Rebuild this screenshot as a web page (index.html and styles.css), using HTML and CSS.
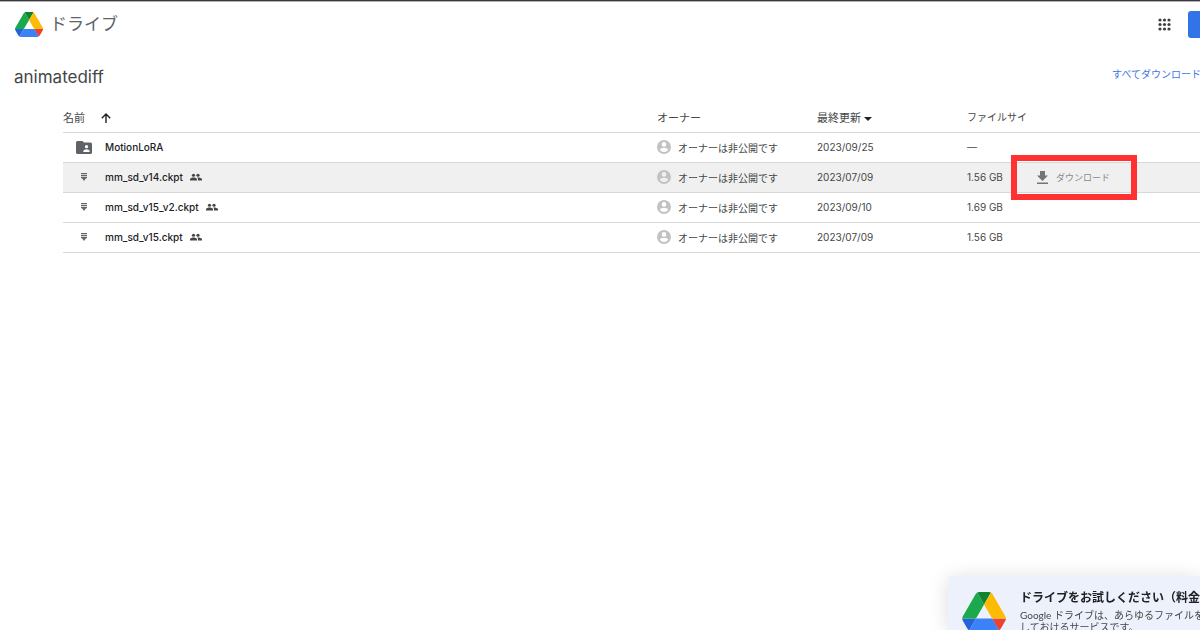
FILE: index.html
```html
<!DOCTYPE html>
<html lang="ja">
<head>
<meta charset="utf-8">
<meta name="viewport" content="width=device-width">
<title>animatediff - ドライブ</title>
<link rel="stylesheet" href="styles.css">
</head>
<body>
<svg class="defs" aria-hidden="true">
  <symbol id="drive" viewBox="0 0 87 78">
    <path d="m6.6 66.85 3.85 6.65c.8 1.4 1.95 2.5 3.3 3.3l13.75-23.8h-27.5c0 1.55.4 3.1 1.2 4.5z" fill="#2463d9"/>
    <path d="m43.65 25-13.75-23.8c-1.35.8-2.5 1.9-3.3 3.3l-25.4 44a9.06 9.06 0 0 0 -1.2 4.5h27.5z" fill="#1ca84c"/>
    <path d="m73.55 76.8c1.35-.8 2.5-1.9 3.3-3.3l1.6-2.75 7.65-13.25c.8-1.4 1.2-2.95 1.2-4.5h-27.5l5.85 11.5z" fill="#ea4335"/>
    <path d="m43.65 25 13.75-23.8c-1.35-.8-2.9-1.2-4.5-1.2h-18.5c-1.6 0-3.15.45-4.5 1.2z" fill="#11832f"/>
    <path d="m59.8 53h-32.3l-13.75 23.8c1.35.8 2.9 1.2 4.5 1.2h50.8c1.6 0 3.15-.45 4.5-1.2z" fill="#3b82f8"/>
    <path d="m73.4 26.5-12.7-22c-.8-1.4-1.95-2.5-3.3-3.3l-13.75 23.8 16.15 28h27.45c0-1.55-.4-3.1-1.2-4.5z" fill="#fdbb05"/>
  </symbol>
  <symbol id="people" viewBox="0 0 24 14">
    <circle cx="7" cy="3.5" r="3.2"/><circle cx="16" cy="3.5" r="3.2"/>
    <path d="M0 14v-2.500c0-2.500 4.500-3.700 7-3.700s7 1.200 7 3.700V14zM16 14v-2.500c0-1.500-.7-2.700-1.800-3.600 3.500-.4 9.800.8 9.800 3.600V14z"/>
  </symbol>
  <symbol id="person" viewBox="0 0 20 20">
    <path fill-rule="evenodd" d="M10 0a10 10 0 1 0 0 20 10 10 0 0 0 0-20zm0 3a3.300 3.300 0 1 1 0 6.600A3.300 3.300 0 0 1 10 3zm0 14.200a7.200 7.200 0 0 1-6-3.200c0-2 4-3.100 6-3.100s6 1.100 6 3.100a7.200 7.200 0 0 1-6 3.200z"/>
  </symbol>
  <symbol id="file" viewBox="0 0 6 8">
    <path d="M0 0h6v1.300H0zM0 2h6v1.300H0zM0 4h6v1.300H5L3 8 1 5.300H0z"/>
  </symbol>
</svg>

<header class="topbar">
  <a class="brand" href="#"><svg class="brand-logo" aria-hidden="true"><use href="#drive"/></svg>ドライブ</a>
  <div class="topbar-actions">
    <button class="apps" aria-label="アプリ">
      <svg viewBox="0 0 13 13" width="13" height="13" fill="#3c4043"><circle cx="2" cy="2" r="1.600"/><circle cx="6.500" cy="2" r="1.600"/><circle cx="11" cy="2" r="1.600"/><circle cx="2" cy="6.500" r="1.600"/><circle cx="6.500" cy="6.500" r="1.600"/><circle cx="11" cy="6.500" r="1.600"/><circle cx="2" cy="11" r="1.600"/><circle cx="6.500" cy="11" r="1.600"/><circle cx="11" cy="11" r="1.600"/></svg>
    </button>
    <button class="account" aria-label="アカウント"></button>
  </div>
</header>

<main class="content">
  <div class="titlebar">
    <h1 class="title">animatediff</h1>
    <a class="download-all" href="#">すべてダウンロード</a>
  </div>

  <table class="files">
    <thead>
      <tr>
        <th>名前<svg class="sort" viewBox="0 0 10 10" width="10" height="10"><path d="M5 10V1M.8 5.200 5 1l4.200 4.200" fill="none" stroke="#202124" stroke-width="1.400"/></svg></th>
        <th class="col-owner">オーナー</th>
        <th class="col-date">最終更新<svg class="caret" viewBox="0 0 8 4" width="8" height="4"><path d="M0 0h8L4 4z" fill="#202124"/></svg></th>
        <th class="col-size">ファイルサイ</th>
        <td class="col-action"></td>
      </tr>
    </thead>
    <tbody>
      <tr>
        <td><div class="name"><span class="kind"><svg viewBox="0 0 16 13" width="16" height="13"><path d="M1.500 0h5L8 1.600h6.500A1.500 1.500 0 0 1 16 3.100v8.400a1.500 1.500 0 0 1-1.500 1.500h-13A1.500 1.500 0 0 1 0 11.500v-10A1.500 1.500 0 0 1 1.500 0z" fill="#5f6368"/><circle cx="10.500" cy="5.700" r="1.600" fill="#fff"/><path d="M7.300 11v-.8c0-1.300 2-2 3.200-2s3.200.7 3.200 2v.8z" fill="#fff"/></svg></span>MotionLoRA</div></td>
        <td><div class="owner"><svg class="avatar"><use href="#person"/></svg>オーナーは非公開です</div></td>
        <td>2023/09/25</td><td>—</td><td></td>
      </tr>
      <tr class="selected">
        <td><div class="name"><span class="kind"><svg class="file-icon"><use href="#file"/></svg></span>mm_sd_v14.ckpt<svg class="shared"><use href="#people"/></svg></div></td>
        <td><div class="owner"><svg class="avatar"><use href="#person"/></svg>オーナーは非公開です</div></td>
        <td>2023/07/09</td><td>1.56 GB</td>
        <td class="action"><button class="download"><svg viewBox="0 0 11 13" width="11" height="13" fill="#757575"><path d="M3 0h5v4.500h3L5.500 10 0 4.500h3zM0 11.600h11V13H0z"/></svg>ダウンロード</button><span class="highlight"></span></td>
      </tr>
      <tr>
        <td><div class="name"><span class="kind"><svg class="file-icon"><use href="#file"/></svg></span>mm_sd_v15_v2.ckpt<svg class="shared"><use href="#people"/></svg></div></td>
        <td><div class="owner"><svg class="avatar"><use href="#person"/></svg>オーナーは非公開です</div></td>
        <td>2023/09/10</td><td>1.69 GB</td><td></td>
      </tr>
      <tr>
        <td><div class="name"><span class="kind"><svg class="file-icon"><use href="#file"/></svg></span>mm_sd_v15.ckpt<svg class="shared"><use href="#people"/></svg></div></td>
        <td><div class="owner"><svg class="avatar"><use href="#person"/></svg>オーナーは非公開です</div></td>
        <td>2023/07/09</td><td>1.56 GB</td><td></td>
      </tr>
    </tbody>
  </table>
</main>

<aside class="promo">
  <svg class="promo-logo" aria-hidden="true"><use href="#drive"/></svg>
  <div class="promo-text">
    <h2 class="promo-title">ドライブをお試しください（料金</h2>
    <p class="promo-body">Google ドライブは、あらゆるファイルを<br>しておけるサービスです。</p>
  </div>
</aside>
</body>
</html>
```

FILE: styles.css
```css
* { box-sizing: border-box; }
html { overflow: hidden; background: #fff; }
body {
  margin: 0;
  min-height: 100vh;
  overflow: hidden;
  border-top: 1px solid #3a383d;
  font-family: Inter, "Noto Sans CJK JP", sans-serif;
  font-size: 10px;
  color: #444746;
}
button { border: 0; padding: 0; background: none; font: inherit; color: inherit; }
a { text-decoration: none; }
svg { flex: none; }
.defs { position: absolute; width: 0; height: 0; }

.topbar {
  display: flex;
  align-items: center;
  justify-content: space-between;
  height: 46px;
  padding-left: 15px;
  border-top: 1px solid #b5b3b8;
}
.brand { display: flex; align-items: center; gap: 7px; font-size: 17px; line-height: 22px; padding-bottom: 1px; color: #5f6368; }
.brand-logo { width: 28px; height: 25px; }
.topbar-actions { display: flex; align-items: center; gap: 17px; }
.apps { display: flex; }
.account { width: 12px; height: 27px; border-radius: 3px 0 0 3px; background: #3273e8; }

.content { background: #fff; }
.titlebar { display: flex; align-items: center; justify-content: space-between; height: 55px; padding-left: 14px; }
.title { margin: 0; padding-top: 4px; font-size: 17px; font-weight: 400; color: #444746; }
.download-all { margin-right: -1px; padding-bottom: 2px; font-size: 10px; color: #3f76df; white-space: nowrap; }

.files { width: calc(100% - 63px); margin-left: 63px; border-collapse: collapse; table-layout: fixed; }
.files th, .files td { height: 30px; padding: 0; border-bottom: 1px solid #d8d8d8; text-align: left; font-weight: 400; white-space: nowrap; }
.files th { font-size: 11px; }
.files .col-size { width: 64px; font-size: 10px; }
.col-owner { width: 160px; }
.col-date { width: 150px; }
.col-action { width: 169px; }
.sort { margin-left: 16px; vertical-align: -1px; }
.caret { margin-left: 3px; vertical-align: 1px; }
.name { display: flex; align-items: center; font-weight: 500; color: #202124; }
.kind { display: flex; justify-content: center; width: 42px; }
.file-icon { width: 6px; height: 8px; fill: #666; }
.shared { width: 12px; height: 8px; margin-left: 7px; fill: #444746; }
.owner { display: flex; align-items: center; gap: 7px; }
.owner { font-size: 10px; }
.avatar { width: 14px; height: 14px; fill: #c2c2c2; }
.selected { background: #f0f0f0; }
.action { position: relative; }
.download { display: flex; align-items: center; gap: 8px; margin-left: 6px; font-size: 9px; color: #8a8a8a; }
.highlight { position: absolute; left: -20px; top: -8px; width: 126px; height: 45px; border: 6px solid #ff3131; pointer-events: none; }

.promo {
  position: fixed;
  right: 0;
  bottom: 0;
  display: flex;
  gap: 14px;
  width: 252px;
  height: 54px;
  padding: 16px 0 0 14px;
  border-radius: 3px 0 0 0;
  background: #edf1fc;
  box-shadow: 0 2px 20px rgba(0, 0, 0, 0.14);
}
.promo-logo { width: 44px; height: 39px; }
.promo-text { white-space: nowrap; }
.promo-title { margin: 0 0 6px; font-size: 12px; line-height: 11px; font-weight: 700; color: #202124; }
.promo-body { margin: 0; font-family: Lato, "Noto Sans CJK JP", sans-serif; font-size: 10px; line-height: 12px; }
```
